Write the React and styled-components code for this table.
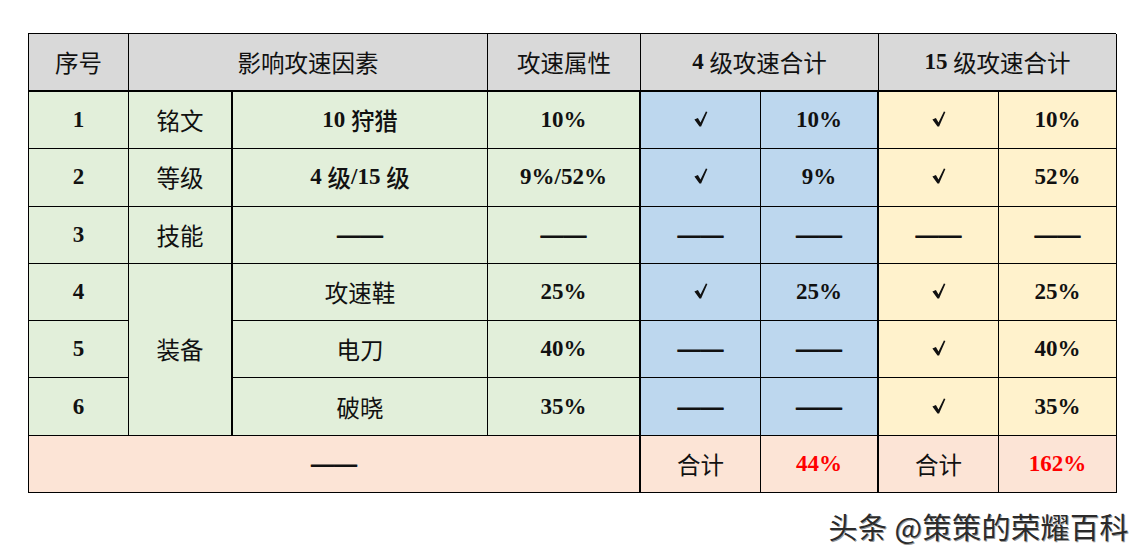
import React from "react";
import styled, { createGlobalStyle } from "styled-components";

const Global = createGlobalStyle`
  html, body { margin: 0; padding: 0; background: #fff; }
  * { box-sizing: border-box; }
`;

const Page = styled.div`
  width: 1146px;
  height: 559px;
  padding: 33px 0 0 28px;
  display: flex;
  flex-direction: column;
  font-family: "Liberation Serif", "Noto Sans CJK SC", serif;
  color: #111;
  overflow: hidden;
`;

const Table = styled.div`
  display: grid;
  width: 1088px;
  grid-template-columns: 100px 104px 255px 153px 120px 118px 120px 118px;
  grid-template-rows: 58px repeat(7, 57.3px);
  border-top: 1px solid #000;
  border-left: 1px solid #000;
`;

const colors = {
  head: "#d9d9d9",
  green: "#e2efda",
  blue: "#bdd7ee",
  yellow: "#fff2cc",
  pink: "#fce4d6",
};

const Cell = styled.div`
  display: flex;
  align-items: center;
  justify-content: center;
  background: ${(p) => colors[p.$bg]};
  border-right: ${(p) => (p.$thickRight ? 2 : 1)}px solid #000;
  border-bottom: ${(p) => (p.$thickBottom ? 2 : 1)}px solid #000;
  grid-column: ${(p) => (p.$span ? `span ${p.$span}` : "auto")};
  grid-row: ${(p) => (p.$rows ? `span ${p.$rows}` : "auto")};
  font-size: 23px;
  color: ${(p) => (p.$red ? "#ff0000" : "#111")};
  white-space: pre;
`;

const Num = styled.span`
  font-family: "Liberation Serif", serif;
  font-weight: 700;
  font-size: 23px;
`;

const Han = styled.span`
  font-family: "Noto Sans CJK SC", sans-serif;
  font-size: 23.5px;
  font-weight: ${(p) => (p.$bold ? 500 : 400)};
`;

const CheckSvg = styled.svg`
  display: block;
  width: 14px;
  height: 16px;
  margin-top: -2px;
`;

const Dash = styled.span`
  font-family: "Liberation Serif", serif;
  font-weight: 700;
  font-size: 23px;
  color: #111;
  text-shadow: 0 0.6px 0 #111;
`;

const Watermark = styled.div`
  align-self: flex-end;
  margin: 12px 17px 0 0;
  font-family: "Noto Sans CJK SC", sans-serif;
  font-size: 29px;
  font-weight: 400;
  color: #2b2b2b;
  letter-spacing: 0.5px;
  text-shadow: -1px 0 0 #fff, 1px 1px 0 #9a9a9a;
`;

const D = () => <Dash>——</Dash>;
const C = () => (
  <CheckSvg viewBox="0 0 14 16" aria-label="√">
    <path d="M0.4 8.6 L3.9 7 L6.5 11.6 L11.9 0.4 L13.4 1 L7.1 15.6 L5.5 15.6 Z" fill="#111" />
  </CheckSvg>
);

const rows = [
  { n: "1", a: "10%", b4: [<C />, "10%"], b15: [<C />, "10%"] },
  { n: "2", a: "9%/52%", b4: [<C />, "9%"], b15: [<C />, "52%"] },
  { n: "3", a: null, b4: [null, null], b15: [null, null] },
  { n: "4", a: "25%", b4: [<C />, "25%"], b15: [<C />, "25%"] },
  { n: "5", a: "40%", b4: [null, null], b15: [<C />, "40%"] },
  { n: "6", a: "35%", b4: [null, null], b15: [<C />, "35%"] },
];

const factor = [
  <><Num>10 </Num><Han $bold>狩猎</Han></>,
  <><Num>4 </Num><Han $bold>级</Han><Num>/15 </Num><Han $bold>级</Han></>,
  <D />,
  <Han>攻速鞋</Han>,
  <Han>电刀</Han>,
  <Han>破晓</Han>,
];

const val = (v) => (v === null ? <D /> : typeof v === "string" ? <Num>{v}</Num> : v);

export default function App() {
  return (
    <>
      <Global />
      <Page>
        <Table>
          <Cell $bg="head" $thickBottom><Han>序号</Han></Cell>
          <Cell $bg="head" $thickBottom $span={2}><Han>影响攻速因素</Han></Cell>
          <Cell $bg="head" $thickBottom><Han>攻速属性</Han></Cell>
          <Cell $bg="head" $thickBottom $span={2}><Num>4 </Num><Han>级攻速合计</Han></Cell>
          <Cell $bg="head" $thickBottom $span={2}><Num>15 </Num><Han>级攻速合计</Han></Cell>

          {rows.map((r, i) => (
            <React.Fragment key={r.n}>
              <Cell $bg="green"><Num>{r.n}</Num></Cell>
              {i === 0 && <Cell $bg="green" $thickRight><Han>铭文</Han></Cell>}
              {i === 1 && <Cell $bg="green" $thickRight><Han>等级</Han></Cell>}
              {i === 2 && <Cell $bg="green" $thickRight><Han>技能</Han></Cell>}
              {i === 3 && <Cell $bg="green" $thickRight $rows={3}><Han>装备</Han></Cell>}
              <Cell $bg="green">{factor[i]}</Cell>
              <Cell $bg="green" $thickRight>{val(r.a)}</Cell>
              <Cell $bg="blue">{val(r.b4[0])}</Cell>
              <Cell $bg="blue" $thickRight>{val(r.b4[1])}</Cell>
              <Cell $bg="yellow">{val(r.b15[0])}</Cell>
              <Cell $bg="yellow">{val(r.b15[1])}</Cell>
            </React.Fragment>
          ))}

          <Cell $bg="pink" $span={4} $thickRight><D /></Cell>
          <Cell $bg="pink"><Han>合计</Han></Cell>
          <Cell $bg="pink" $red $thickRight><Num>44%</Num></Cell>
          <Cell $bg="pink"><Han>合计</Han></Cell>
          <Cell $bg="pink" $red><Num>162%</Num></Cell>
        </Table>
        <Watermark>头条 @策策的荣耀百科</Watermark>
      </Page>
    </>
  );
}
